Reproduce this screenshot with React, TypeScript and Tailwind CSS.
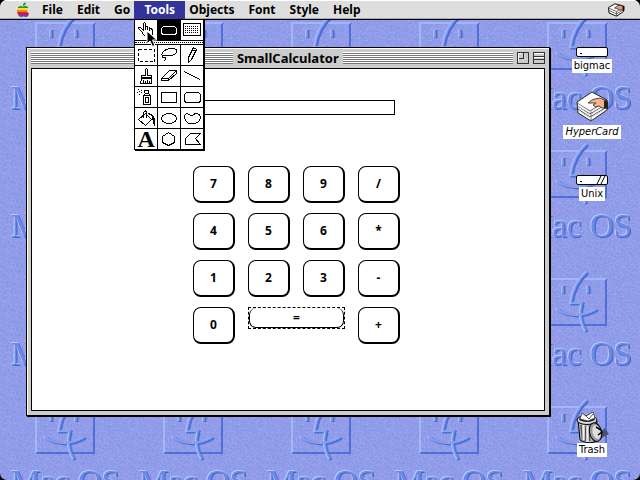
import React from "react";

const speckles = (seed: number, count: number) => {
  let s = seed;
  let d = "";
  for (let i = 0; i < count; i++) {
    s = (s * 1103515245 + 12345) % 2147483648;
    const x = Math.floor(s / 65536) % 64;
    s = (s * 1103515245 + 12345) % 2147483648;
    const y = Math.floor(s / 65536) % 64;
    d += `M${x} ${y}h1v1h-1z`;
  }
  return d;
};

const specklesBlue = speckles(7, 1300);
const specklesViolet = speckles(91, 1100);
const specklesPale = speckles(403, 500);

const faceLines =
  "M75 16Q62 27 59 47H70Q66 62 74 75M45 53Q65 65 85 53M51 29V37M76 29V37";

function Wallpaper() {
  return (
    <svg className="absolute inset-0 h-full w-full" aria-hidden="true">
      <defs>
        <pattern id="grain" width="64" height="64" patternUnits="userSpaceOnUse">
          <rect width="64" height="64" fill="#909ce9" />
          <g shapeRendering="crispEdges">
            <path d={specklesBlue} fill="#7f98e0" />
            <path d={specklesViolet} fill="#9b9bf0" />
            <path d={specklesPale} fill="#9aa8ea" />
          </g>
        </pattern>
        <pattern id="tile" width="128" height="128" patternUnits="userSpaceOnUse">
          <g fill="none" strokeWidth="2">
            <path d="M36 69H94V23" stroke="#4e70d6" />
            <path d="M36 69V23H94" stroke="#a9bffa" strokeWidth="1.5" />
            <path d={faceLines} stroke="#4c6ed4" strokeWidth="3" transform="translate(1 1)" />
            <path d={faceLines} stroke="#a6c0fc" strokeWidth="2" transform="translate(-1 0)" />
            <path d={faceLines} stroke="#7f98ec" strokeWidth="1.5" />
          </g>
          <g fontFamily="'Liberation Serif', serif" fontSize="33" fontWeight="400">
            <text x="12" y="110" fill="#3f62cc">Mac OS</text>
            <text x="10" y="108" fill="#b4ccff">Mac OS</text>
            <text x="11" y="109" fill="#6c88e2">Mac OS</text>
          </g>
        </pattern>
      </defs>
      <rect width="100%" height="100%" fill="url(#grain)" />
      <rect width="100%" height="100%" fill="url(#tile)" />
    </svg>
  );
}

function Apple() {
  return (
    <svg width="14" height="16" viewBox="0 0 14 16" aria-hidden="true">
      <defs>
        <clipPath id="apple">
          <path d="M6.5 4.5C4 3 1 4.500 1 8.500C1 12 3 15 5 15C6 15 6.500 14.500 7.500 14.500S9 15 10 15C11.500 15 13 13 13 11.500C11 10.500 10.500 7.500 12.500 6C11.500 4 9 3.500 7.500 4.500ZM7 4C6.500 2 8 .5 10 .5C10 2.500 9 3.500 7 4Z" />
        </clipPath>
      </defs>
      <g clipPath="url(#apple)" shapeRendering="crispEdges">
        <rect width="14" height="6" fill="#1f9b2f" />
        <rect y="6" width="14" height="2" fill="#f3e02c" />
        <rect y="8" width="14" height="2" fill="#f58220" />
        <rect y="10" width="14" height="2" fill="#dd2222" />
        <rect y="12" width="14" height="2" fill="#8a2f9c" />
        <rect y="14" width="14" height="2" fill="#2b50c8" />
      </g>
    </svg>
  );
}

function CardStack() {
  return (
    <svg width="32" height="32" viewBox="0 0 32 32" aria-hidden="true">
      <path d="M1 11L16 1L31 9V19L15 30L2 22Z" fill="#fff" stroke="#222" />
      <path d="M1 12L14 20L31 9M1 15L14 23L31 13M2 18L14 26L31 16M15 20V30" fill="none" stroke="#555" />
      <path d="M2 13L14 21L26 13M2 16L14 24L27 16M3 20L14 27L28 19" fill="none" stroke="#ddd" />
      <path d="M12 12L16 9L19 8L24 7L31 10V17L26 17L23 15L20 16L17 14L20 12L15 12Z" fill="#f6b48a" stroke="#222" strokeWidth=".8" />
      <path d="M28 9L32 11V18L28 17Z" fill="#222" />
    </svg>
  );
}

function SmallCardStack() {
  return (
    <svg width="17" height="14" viewBox="0 0 17 14" aria-hidden="true">
      <path d="M.5 4.500L7 .8L15.500 3V8.500L8.500 13.200L1 10Z" fill="#fff" stroke="#111" />
      <path d="M.5 5L8.500 8.500L15.500 4.500M1 7.500L8.500 11L15.500 6.500M8.500 8.500V13" fill="none" stroke="#444" strokeWidth=".8" />
      <path d="M6.500 5L10 2.500L13 2.500L15.500 3.500V7L12 7L10 6L8.500 5.500Z" fill="#ee9a70" stroke="#222" strokeWidth=".7" />
      <path d="M14.500 3H16.500V7.500H14.500Z" fill="#111" />
    </svg>
  );
}

function Drive({ slashes }: { slashes?: boolean }) {
  return (
    <svg width="32" height="10" viewBox="0 0 32 10" aria-hidden="true">
      <rect x=".5" y=".5" width="31" height="9" rx="1.500" fill="#fff" stroke="#000" />
      <path d="M4 6.500h2" stroke="#000" />
      {slashes && <path d="M21 9L25 1M25 9L29 1" stroke="#000" />}
    </svg>
  );
}

function TrashCan() {
  return (
    <svg className="overflow-visible" width="32" height="32" viewBox="0 0 32 32" aria-hidden="true">
      <g transform="translate(0 2)">
        <path d="M22 29L33 23L28 17Z" fill="#4a4f6a" />
        <path d="M2 9L4 29Q10 33 19 31L21 10Z" fill="#b0b0b0" stroke="#000" />
        <path d="M5 14L6.500 29M9.500 15V30M13.500 15V30" stroke="#555" strokeWidth="1.500" />
        <path d="M7.500 14V29M11.500 15V31" stroke="#f2f2f2" strokeWidth="2" />
        <ellipse cx="11" cy="9" rx="10" ry="4.500" fill="#ddd" stroke="#000" />
        <ellipse cx="11" cy="8" rx="8" ry="3" fill="#222" />
        <path d="M4 8L6 2L10 5L17 1L19 7L12 10Z" fill="#fff" stroke="#333" strokeWidth=".8" />
        <path d="M10 5L13 8L17 3" fill="none" stroke="#333" strokeWidth=".8" />
        <ellipse cx="19.500" cy="21" rx="6" ry="9.500" fill="#9a9a9a" stroke="#000" transform="rotate(-14 20 21)" />
        <ellipse cx="20.500" cy="21" rx="4" ry="7" fill="#ddd" transform="rotate(-14 21 21)" />
        <path d="M20 16L25 19L26 21L22 24" fill="none" stroke="#000" strokeWidth="1.500" />
      </g>
    </svg>
  );
}

const tools: { name: string; art: React.ReactNode }[] = [
  {
    name: "Browse",
    art: <path d="M10.500 16.500L8.500 14.500L6.500 11.500L3.500 8.500V7.500H5.500L8.500 10.500V3.500L9.500 2.500L10.500 3.500V9.500M11 6.500H12.500V9.500M13.500 7.500H14.500V10.500M15.500 8.500L17.500 9.500V13.500L16.500 16.500" />,
  },
  { name: "Button", art: <rect x="3.500" y="6.500" width="15" height="8" rx="3" stroke="#fff" strokeWidth="1" /> },
  {
    name: "Field",
    art: (
      <>
        <rect x="2.500" y="3.500" width="17" height="12" />
        <path d="M4 6.500H18M4 8.500H18M4 10.500H18M4 12.500H18" strokeDasharray="1 1" />
      </>
    ),
  },
  { name: "Select", art: <rect x="3.500" y="4.500" width="16" height="12" strokeDasharray="3 2" /> },
  {
    name: "Lasso",
    art: <path d="M5.500 12.500C1.500 9.500 5.500 3.500 14.500 3.500C21.500 3.500 19.500 9.500 12.500 10.500C9.500 11.500 8.500 9.500 5.500 10.500C3.500 11.500 4.500 13.500 6.500 12.500C8.500 11.500 7.500 13.500 6.500 16.500" />,
  },
  { name: "Pencil", art: <path d="M7.500 17.500V12.500L12.500 2.500L15.500 4.500L10.500 14.500L7.500 17.500M11.500 4.500L14.500 6.500" /> },
  {
    name: "Brush",
    art: (
      <>
        <path d="M10.500 9.500V3.500L11.500 2.500L12.500 3.500V9.500H16.500V12.500H6.500V9.500H10.500M6.500 12.500L5.500 17.500H16.500V12.500M8.500 17V14M10.500 17V15M12.500 17V14M14.500 17V15" />
        <path d="M6 11.500H17" />
      </>
    ),
  },
  { name: "Eraser", art: <path d="M3.500 12.500L11.500 4.500H18.500L10.500 12.500H3.500V14.500H10.500L18.500 7.500V4.500M10.500 12.500V15" /> },
  { name: "Line", art: <path d="M3 5.500L19 13.500" /> },
  {
    name: "Spray",
    art: (
      <>
        <path d="M8.500 17.500V8.500L10.500 6.500H13.500L15.500 8.500V17.500ZM9.500 6V3.500H13.500V6M10.500 10.500H13.500V15.500H10.500ZM9 8.500H15" />
        <path d="M3 2.500H4M6 3.500H7M4 4.500H5M2 5.500H3M6 5.500H7M4 7.500H5" />
      </>
    ),
  },
  { name: "Rectangle", art: <rect x="3.500" y="5.500" width="15" height="10" /> },
  { name: "Round Rectangle", art: <rect x="3.500" y="5.500" width="16" height="10" rx="3" /> },
  {
    name: "Bucket",
    art: (
      <>
        <path d="M3.500 11.500L10.500 5.500L16.500 11.500L10.500 17.500ZM8.500 10V4.500L10.500 2.500L11.500 4.500V10" />
        <path d="M13.500 5.500L17.500 7.500L19.500 10.500V17.500M18.500 9V16M17.500 8V12" />
      </>
    ),
  },
  { name: "Oval", art: <ellipse cx="11" cy="10.500" rx="7.500" ry="5" /> },
  { name: "Curve", art: <path d="M9.500 7.500C3.500 2.500 1.500 9.500 6.500 14.500C8.500 16.500 14.500 16.500 17.500 13.500C21.500 8.500 17.500 3.500 12.500 6.500Q11.500 8.500 9.500 7.500" /> },
  { name: "Text", art: null },
  { name: "Regular Polygon", art: <path d="M10.500 3.500L16.500 7.500V13.500L10.500 16.500L4.500 13.500V7.500Z" /> },
  { name: "Polygon", art: <path d="M9.500 4.500H19.500L14.500 9.500L19.500 15.500H4.500V9.500Z" /> },
];

function Tool({ name, art }: { name: string; art: React.ReactNode }) {
  return (
    <button
      aria-label={name}
      className={`flex h-5 items-center justify-center ${name === "Button" ? "bg-black" : "bg-white"}`}
    >
      {art ? (
        <svg width="22" height="20" viewBox="0 0 22 20" fill="none" stroke="#000" shapeRendering="crispEdges">
          {art}
        </svg>
      ) : (
        <span className="font-['Liberation_Serif',serif] text-[24px] leading-5 font-bold">A</span>
      )}
    </button>
  );
}

function ToolPalette() {
  return (
    <div className="absolute top-full left-0 z-10 w-[70px] border border-black bg-black shadow-[1px_1px_0_#000]">
      <div className="grid grid-cols-3 gap-px">
        {tools.slice(0, 3).map((t) => (
          <Tool key={t.name} {...t} />
        ))}
      </div>
      <div className="my-px flex h-[3px] items-center bg-white">
        <div className="w-full border-t border-dotted border-black" />
      </div>
      <div className="grid grid-cols-3 gap-px">
        {tools.slice(3).map((t) => (
          <Tool key={t.name} {...t} />
        ))}
      </div>
      <svg className="absolute top-[10px] left-[11px]" width="12" height="18" viewBox="0 0 12 18" aria-hidden="true">
        <path d="M1 1V14L4 11L6.500 16.500L9 15.500L6.500 10H11Z" fill="#000" stroke="#fff" />
      </svg>
    </div>
  );
}

const menus = ["File", "Edit", "Go", "Tools", "Objects", "Font", "Style", "Help"];

function MenuBar() {
  return (
    <header className="relative z-10 flex h-5 items-center border-t border-b border-t-white border-b-black bg-[#dedede] pr-[15px] pl-4 shadow-[inset_0_-1px_0_#aaa]">
      <button aria-label="Apple menu" className="mr-[5px]">
        <Apple />
      </button>
      <nav className="flex h-full">
        {menus.map((m) =>
          m === "Tools" ? (
            <div key={m} className="relative -mx-[3px] h-full w-[51px]">
              <button className="h-full w-full bg-[#333399] leading-[18px] text-white">{m}</button>
              <ToolPalette />
            </div>
          ) : (
            <button key={m} className="px-[7px] leading-[18px]">
              {m}
            </button>
          ),
        )}
      </nav>
      <button aria-label="HyperCard" className="ml-auto">
        <SmallCardStack />
      </button>
    </header>
  );
}

function Stripes({ className }: { className: string }) {
  return (
    <div
      className={`h-3 bg-[repeating-linear-gradient(to_bottom,#fff_0px,#fff_1px,#777_1px,#777_2px)] ${className}`}
    />
  );
}

function TitleBar() {
  return (
    <div className="flex h-5 items-center gap-1">
      <Stripes className="flex-[204]" />
      <h1 className="text-[13px] leading-5">SmallCalculator</h1>
      <Stripes className="flex-[172]" />
      <button aria-label="Zoom window">
        <svg width="12" height="12" viewBox="0 0 12 12" fill="none" shapeRendering="crispEdges">
          <rect x=".5" y=".5" width="11" height="11" fill="#ccc" stroke="#333" />
          <path d="M1 6.500H6.500V1" stroke="#333" />
          <path d="M1.500 10V1.500H5" stroke="#fff" />
        </svg>
      </button>
      <button aria-label="Collapse window">
        <svg width="12" height="12" viewBox="0 0 12 12" fill="none" shapeRendering="crispEdges">
          <rect x=".5" y=".5" width="11" height="11" fill="#ccc" stroke="#333" />
          <path d="M1 4.500H11M1 7.500H11" stroke="#333" />
          <path d="M1 1.500H11M1 5.500H11" stroke="#fff" />
        </svg>
      </button>
    </div>
  );
}

const keys = ["7", "8", "9", "/", "4", "5", "6", "*", "1", "2", "3", "-", "0", "=", "+"];

function Calculator() {
  return (
    <section className="flex flex-1 flex-col border border-black bg-[#ccc] px-1 pb-1 shadow-[inset_1px_1px_0_#fff,1px_1px_0_#000]">
      <TitleBar />
      <div className="flex-1 border border-black bg-white pt-[31px] pl-[161px]">
        <input
          aria-label="Result"
          readOnly
          className="block h-[15px] w-[202px] border border-black bg-white outline-none"
        />
        <div className="mt-[51px] grid w-max grid-cols-[repeat(4,42px)] gap-x-[13px] gap-y-[10px]">
          {keys.map((k) =>
            k === "=" ? (
              <div key={k} className="col-span-2 h-[22px] border border-dashed border-black">
                <button className="block h-full w-full rounded-[7px] border-r border-b border-l border-black leading-5">
                  {k}
                </button>
              </div>
            ) : (
              <button
                key={k}
                className="h-[37px] rounded-[8px] border border-r-2 border-b-2 border-black bg-white"
              >
                {k}
              </button>
            ),
          )}
        </div>
      </div>
    </section>
  );
}

function DesktopIcon({ label, italic, children }: { label: string; italic?: boolean; children: React.ReactNode }) {
  return (
    <button className="flex flex-col items-center gap-[2px]">
      {children}
      <span
        className={`relative bg-white px-[2px] font-['DejaVu_Sans_Condensed','DejaVu_Sans',sans-serif] text-[11px] leading-[14px] font-normal ${italic ? "italic" : ""}`}
      >
        {label}
      </span>
    </button>
  );
}

export default function App() {
  return (
    <div className="min-h-screen bg-black">
      <div className="relative flex min-h-screen flex-col overflow-hidden rounded-[7px] font-['Noto_Sans',sans-serif] text-[12px] font-bold text-black">
        <Wallpaper />
        <MenuBar />
        <main className="relative flex flex-1">
          <div className="flex flex-1 pt-[27px] pb-[64px] pl-[26px]">
            <Calculator />
          </div>
          <aside className="flex w-[90px] flex-col items-center pt-[27px] pr-[6px] pb-[23px]">
            <DesktopIcon label="bigmac">
              <Drive />
            </DesktopIcon>
            <div className="mt-[18px]">
              <DesktopIcon label="HyperCard" italic>
                <CardStack />
              </DesktopIcon>
            </div>
            <div className="mt-[36px]">
              <DesktopIcon label="Unix">
                <Drive slashes />
              </DesktopIcon>
            </div>
            <div className="mt-auto">
              <DesktopIcon label="Trash">
                <TrashCan />
              </DesktopIcon>
            </div>
          </aside>
        </main>
      </div>
    </div>
  );
}
